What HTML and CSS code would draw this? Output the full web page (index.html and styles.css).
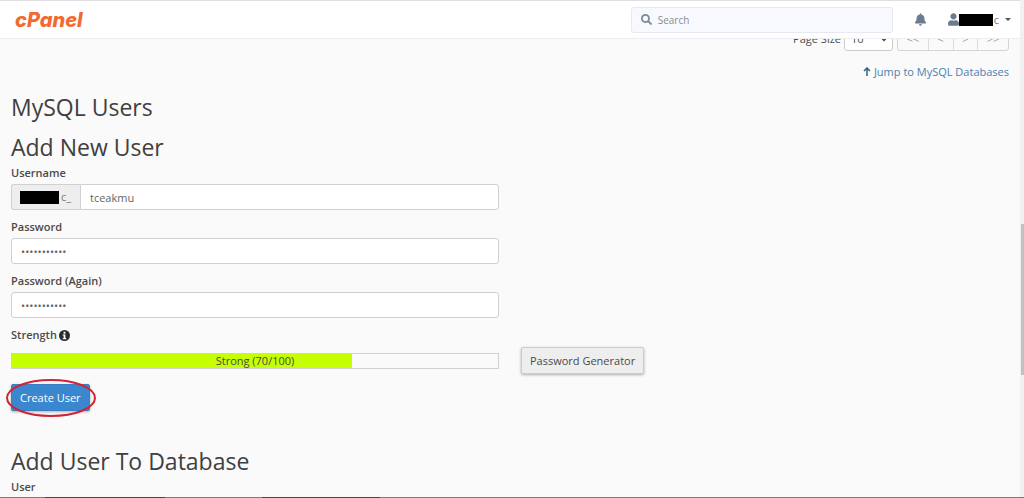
FILE: index.html
```
<!DOCTYPE html>
<html lang="en">
<head>
    <meta charset="UTF-8">
    <meta name="viewport" content="width=device-width, initial-scale=1.0">
    <title>cPanel - MySQL Databases</title>
    <link rel="stylesheet" href="styles.css">
</head>
<body>
    <header class="topbar">
        <a class="logo" href="#">cPanel</a>
        <label class="search">
            <svg class="search-icon" viewBox="0 0 512 512" aria-hidden="true"><path d="M505 442.700 405.300 343c-4.500-4.500-10.600-7-17-7H372c27.600-35.300 44-79.700 44-128C416 93.100 322.900 0 208 0S0 93.100 0 208s93.100 208 208 208c48.300 0 92.700-16.400 128-44v16.300c0 6.400 2.500 12.500 7 17l99.700 99.700c9.400 9.400 24.600 9.400 33.900 0l28.300-28.300c9.400-9.400 9.400-24.600.1-34zM208 336c-70.700 0-128-57.200-128-128 0-70.700 57.200-128 128-128 70.700 0 128 57.200 128 128 0 70.700-57.200 128-128 128z"/></svg>
            <input type="search" placeholder="Search" aria-label="Search">
        </label>
        <button class="bell" type="button" aria-label="Notifications">
            <svg viewBox="0 0 448 512"><path d="M224 512c35.300 0 64-28.700 64-64H160c0 35.300 28.600 64 64 64zm215.400-149.700c-19.300-20.800-55.500-52-55.500-154.300 0-77.700-54.500-139.900-127.900-155.200V32c0-17.700-14.300-32-32-32s-32 14.300-32 32v20.800C118.600 68.100 64.100 130.300 64.100 208c0 102.300-36.200 133.500-55.500 154.300-6 6.400-8.700 14.200-8.600 21.700.1 16.400 13 32 32.100 32h383.800c19.100 0 32-15.600 32.100-32 .1-7.500-2.600-15.300-8.600-21.700z"/></svg>
        </button>
        <button class="account" type="button" aria-label="Account">
            <svg class="user-icon" viewBox="0 0 448 512"><path d="M224 256c70.700 0 128-57.300 128-128S294.700 0 224 0 96 57.300 96 128s57.300 128 128 128zm89.600 32h-16.700c-22.200 10.200-46.900 16-72.900 16s-50.600-5.800-72.900-16h-16.700C60.200 288 0 348.200 0 422.400V464c0 26.500 21.500 48 48 48h352c26.500 0 48-21.500 48-48v-41.600c0-74.200-60.200-134.400-134.400-134.400z"/></svg>
            <span class="redacted redacted-account"></span>
            <span>c</span>
            <span class="caret"></span>
        </button>
    </header>

    <main class="content">
        <div class="pager">
            <label for="page-size">Page Size</label>
            <select id="page-size">
                <option>10</option>
                <option>20</option>
                <option>50</option>
            </select>
            <div class="pages">
                <button type="button">&lt;&lt;</button>
                <button type="button">&lt;</button>
                <button type="button">&gt;</button>
                <button type="button">&gt;&gt;</button>
            </div>
        </div>
        <div class="jump">
            <a href="#databases">
                <svg viewBox="0 0 8 9" aria-hidden="true"><path d="M4 9V1M1 4l3-3 3 3"/></svg>
                Jump to MySQL Databases
            </a>
        </div>

        <h2>MySQL Users</h2>
        <h2>Add New User</h2>
        <form class="user-form">
            <div class="field">
                <label for="username">Username</label>
                <div class="input-group">
                    <span class="prefix"><span class="redacted redacted-prefix"></span>c_</span>
                    <input id="username" type="text" value="tceakmu">
                </div>
            </div>
            <div class="field">
                <label for="password">Password</label>
                <input id="password" type="password" value="abcdefghijk">
            </div>
            <div class="field">
                <label for="password-again">Password (Again)</label>
                <input id="password-again" type="password" value="abcdefghijk">
            </div>
            <div class="strength-label">
                Strength
                <svg viewBox="0 0 12 12" aria-hidden="true"><circle cx="6" cy="6" r="6"/><path d="M5 2h2v2H5zM4 5h3v4h1v1H4V9h1V6H4z"/></svg>
            </div>
            <div class="strength-row">
                <div class="strength">
                    <div class="strength-bar" style="width: 70%"></div>
                    <span class="strength-text">Strong (70/100)</span>
                </div>
                <button class="btn" type="button">Password Generator</button>
            </div>
            <div class="actions">
                <button class="btn btn-primary" type="button">Create User</button>
                <svg class="highlight" viewBox="0 0 90 38" aria-hidden="true"><ellipse cx="45" cy="19" rx="44" ry="18"/></svg>
            </div>
        </form>

        <h2>Add User To Database</h2>
        <label class="user-label" for="db-user">User</label>
        <select id="db-user" class="db-user"><option>tceakmu</option></select>
    </main>

    <div class="scrollbar"><div class="thumb"></div></div>
    <div class="taskbar"></div>
</body>
</html>
```

FILE: styles.css
```
* {
    box-sizing: border-box;
}
body {
    height: 100vh;
    margin: 0;
    overflow: hidden;
    background: #fafafa;
    color: #4a4a4a;
    font-family: "Open Sans", sans-serif;
    font-size: 11px;
    line-height: 16px;
}
input, select, button {
    font: inherit;
    color: inherit;
}
a {
    color: #4a7fb0;
    text-decoration: none;
}
h2 {
    margin: 12px 0 4px;
    color: #404040;
    font-size: 23px;
    font-weight: 400;
    line-height: 28px;
}

/* top bar */
.topbar {
    position: fixed;
    top: 0;
    left: 0;
    right: 4px;
    z-index: 2;
    display: flex;
    align-items: center;
    height: 39px;
    padding: 0 9px 0 15px;
    background: #fff;
    border-top: 1px solid #dfdfe2;
    border-bottom: 1px solid #eee;
}
.logo {
    margin-right: auto;
    color: #f4692f;
    font-family: Inter, sans-serif;
    font-size: 20px;
    font-style: italic;
    font-weight: 800;
    line-height: 24px;
}
.search {
    display: flex;
    align-items: center;
    width: 262px;
    height: 26px;
    padding: 0 9px;
    gap: 6px;
    background: #f7f9fe;
    border: 1px solid #e6e9f1;
    border-radius: 3px;
}
.search-icon {
    width: 11px;
    height: 11px;
    fill: #7b8799;
}
.search input {
    flex: 1;
    min-width: 0;
    padding: 0;
    border: 0;
    outline: 0;
    background: none;
    font-size: 10px;
}
.search input::placeholder {
    color: #8c8c8c;
}
.bell, .account {
    display: flex;
    align-items: center;
    padding: 0;
    border: 0;
    background: none;
    color: #777;
}
.bell {
    margin: 0 22px;
}
.bell svg {
    width: 11px;
    height: 13px;
    fill: #6b7b90;
}
.user-icon {
    width: 11px;
    height: 13px;
    fill: #6b7b90;
}
.redacted {
    display: inline-block;
    background: #000;
}
.redacted-account {
    width: 34px;
    height: 12px;
    margin-right: 1px;
}
.caret {
    margin-left: 6px;
    border: 3px solid transparent;
    border-top-color: #555;
    border-bottom: 0;
}

/* page */
.content {
    padding: 26px 15px 0 11px;
}
.pager {
    display: flex;
    justify-content: flex-end;
    align-items: center;
    height: 25px;
}
.pager select {
    width: 49px;
    height: 25px;
    margin: 0 4px 0 3px;
    padding: 0 2px;
    background: #fff;
    border: 1px solid #ccc;
    border-radius: 3px;
}
.pages {
    display: flex;
    width: 112px;
    border: 1px solid #d5d5d5;
    border-radius: 3px;
}
.pages button {
    flex: 1 1 auto;
    height: 23px;
    padding: 0 8px;
    border: 0;
    border-right: 1px solid #ddd;
    background: none;
    color: #999;
}
.pages button:last-child {
    border-right: 0;
}
.jump {
    margin: 13px 0;
    text-align: right;
}
.jump svg {
    width: 8px;
    height: 9px;
    fill: none;
    stroke: #2f6384;
    stroke-width: 1.5;
}

/* form */
.field {
    width: 488px;
    max-width: 100%;
    margin-bottom: 9px;
}
.field label {
    display: block;
    margin-bottom: 3px;
    font-weight: 600;
}
.field input {
    display: block;
    width: 100%;
    height: 26px;
    padding: 0 9px;
    background: #fff;
    border: 1px solid #d0d0d0;
    border-radius: 3px;
    color: #666;
}
.input-group {
    display: flex;
}
.input-group input {
    flex: 1;
    min-width: 0;
    border-radius: 0 3px 3px 0;
}
.prefix {
    display: flex;
    align-items: center;
    width: 69px;
    padding-left: 8px;
    background: #eee;
    border: 1px solid #d0d0d0;
    border-right: 0;
    border-radius: 3px 0 0 3px;
    color: #777;
}
.redacted-prefix {
    width: 39px;
    height: 13px;
    margin-right: 2px;
}
.strength-label {
    display: flex;
    align-items: center;
    gap: 2px;
    font-weight: 600;
}
.strength-label svg {
    width: 11px;
    height: 11px;
    fill: #2b2b2b;
}
.strength-label path {
    fill: #fff;
}
.strength-row {
    display: flex;
    align-items: center;
    gap: 22px;
    margin-top: 4px;
}
.strength {
    position: relative;
    width: 488px;
    height: 16px;
    border: 1px solid #d0d0d0;
}
.strength-bar {
    height: 100%;
    background: #c6ff00;
}
.strength-text {
    position: absolute;
    inset: 0;
    line-height: 14px;
    text-align: center;
}
.btn {
    height: 27px;
    padding: 0 8px;
    background: #eee;
    border: 1px solid #ccc;
    border-radius: 2px;
    box-shadow: 0 1px 3px rgba(0, 0, 0, 0.3);
}
.btn-primary {
    background: #3a87d0;
    border-color: #3a7fc4;
    color: #fff;
}
.actions {
    position: relative;
    margin: 10px 0 36px;
}
.highlight {
    position: absolute;
    top: -5px;
    left: -5px;
    width: 90px;
    height: 38px;
    fill: none;
    stroke: #cf2434;
    stroke-width: 2;
}
.user-label {
    display: block;
    margin-bottom: 3px;
    font-weight: 600;
}
.db-user {
    width: 488px;
    height: 26px;
}

/* window edges */
.scrollbar {
    position: fixed;
    top: 0;
    right: 0;
    bottom: 0;
    width: 4px;
    padding-top: 224px;
    background: #f1f1f1;
}
.thumb {
    width: 3px;
    height: 151px;
    margin-left: auto;
    background: #c1c1c1;
}
.taskbar {
    position: fixed;
    left: 0;
    right: 0;
    bottom: 0;
    z-index: 3;
    height: 1px;
    background: linear-gradient(to right, #777b85 45px, #48484c 45px 165px, #777b85 165px 262px, #48484c 262px 380px, #777b85 380px);
}
```
